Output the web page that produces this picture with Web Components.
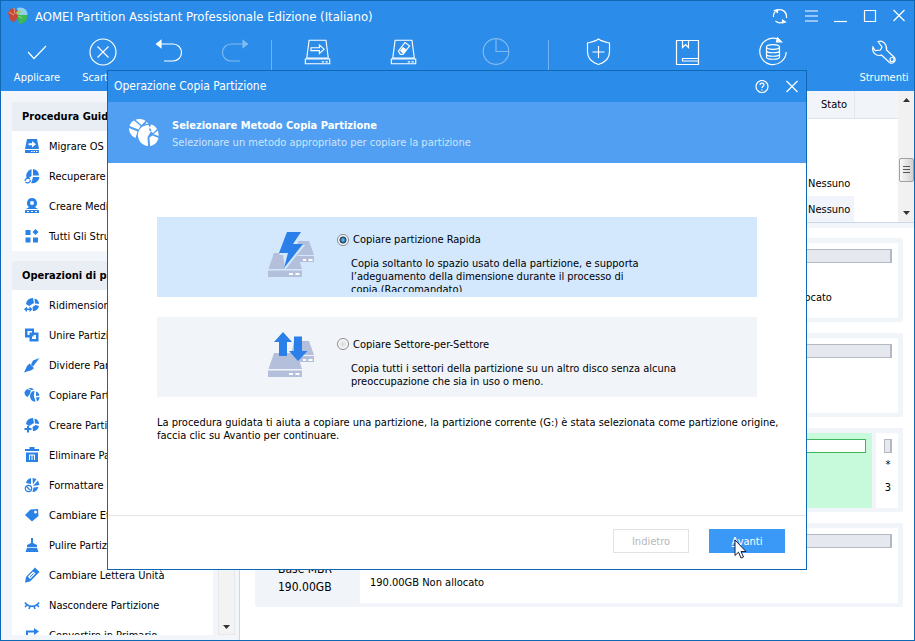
<!DOCTYPE html>
<html lang="it">
<head>
<meta charset="utf-8">
<title>AOMEI Partition Assistant</title>
<style>
html,body{height:100%}
body{margin:0;font:11px/13px "DejaVu Sans Condensed","DejaVu Sans","Liberation Sans",sans-serif;color:#000;--blue:#2b8ce9;--line:#0e68b4;--pale:#f1f4f9;--icon:#2a82e6}
</style>
</head>
<body>
<pa-window>
  <pa-titlebar slot="top">AOMEI Partition Assistant Professionale Edizione (Italiano)</pa-titlebar>
  <pa-toolbar slot="top"></pa-toolbar>
  <pa-sidebar slot="side">
    <pa-group heading="Procedura Guidata">
      <pa-action icon="migrate">Migrare OS su SSD</pa-action>
      <pa-action icon="recover">Recuperare Partizione</pa-action>
      <pa-action icon="media">Creare Media Avviabile</pa-action>
      <pa-action icon="tools">Tutti Gli Strumenti</pa-action>
    </pa-group>
    <pa-group heading="Operazioni di partizione">
      <pa-action icon="resize">Ridimensionare Partizione</pa-action>
      <pa-action icon="merge">Unire Partizioni</pa-action>
      <pa-action icon="split">Dividere Partizione</pa-action>
      <pa-action icon="copy">Copiare Partizione</pa-action>
      <pa-action icon="create">Creare Partizione</pa-action>
      <pa-action icon="trash">Eliminare Partizione</pa-action>
      <pa-action icon="format">Formattare Partizione</pa-action>
      <pa-action icon="tag">Cambiare Etichetta</pa-action>
      <pa-action icon="broom">Pulire Partizione</pa-action>
      <pa-action icon="pencil">Cambiare Lettera Unità</pa-action>
      <pa-action icon="hide">Nascondere Partizione</pa-action>
      <pa-action icon="convert">Convertire in Primario</pa-action>
    </pa-group>
  </pa-sidebar>
  <pa-volumes slot="main"></pa-volumes>
  <pa-disks slot="main">
    <pa-disk><pa-part></pa-part><pa-part kind="tail">Non allocato</pa-part></pa-disk>
    <pa-disk><pa-part></pa-part></pa-disk>
    <pa-disk><pa-part kind="selected"></pa-part><pa-part kind="small">*<br>3</pa-part></pa-disk>
    <pa-disk size="190.00GB"><span slot="type">Base MBR</span><pa-part>190.00GB Non allocato</pa-part></pa-disk>
  </pa-disks>
  <pa-dialog slot="dialog" heading="Operazione Copia Partizione">
    <strong slot="title">Selezionare Metodo Copia Partizione</strong>
    <span slot="subtitle">Selezionare un metodo appropriato per copiare la partizione</span>
    <pa-method icon="fast" label="Copiare partizione Rapida" checked>Copia soltanto lo spazio usato della partizione, e supporta<br>l’adeguamento della dimensione durante il processo di<br>copia.(Raccomandato)</pa-method>
    <pa-method icon="sector" label="Copiare Settore-per-Settore">Copia tutti i settori della partizione su un altro disco senza alcuna<br>preoccupazione che sia in uso o meno.</pa-method>
    <span slot="note">La procedura guidata ti aiuta a copiare una partizione, la partizione corrente (G:) è stata selezionata come partizione origine,<br>faccia clic su Avantio per continuare.</span>
  </pa-dialog>
</pa-window>
<script>
const disk = '<path d="M4.5 3.5h18l2.500 19h-23z"/><path d="M.5 23.500h26v5h-26z"/><path d="M18 26.500h2.500M22 26.500h2.500"/>';
const line = {
  check:[28,28,'<path d="M5 14l6 6.500L23 8"/>'],
  discard:[28,28,'<circle cx="14" cy="14" r="13"/><path d="M8.500 8.500l11 11M19.500 8.500l-11 11"/>'],
  undo:[28,28,'<path d="M5 6h13a8.500 8.500 0 0 1 0 17h-9"/><path d="M1.500 6l4.500-3.500v7z" fill="currentColor"/>'],
  redo:[28,28,'<path d="M23 6h-13a8.500 8.500 0 0 0 0 17h9"/><path d="M26.500 6l-4.500-3.500v7z" fill="currentColor"/>'],
  diskcopy:[28,32,disk+'<path d="M6.500 11.500h9v-3l5 4.500-5 4.500v-3h-9z"/>'],
  diskwipe:[28,32,disk+'<path d="M8 15l7-9 5 3.500-7 9h-3z"/><path d="M10.500 14.500l2.500-3 3 2-3 3.500z" fill="currentColor"/>'],
  clock:[28,28,'<circle cx="14" cy="13.500" r="12.800"/><path d="M14 .5v13h13"/>'],
  shield:[28,30,'<path d="M14.500 2c3 2.500 7 3 11 4v9c0 7-5 10.500-11 12.500C8.500 25.500 3.500 22 3.500 15V6c4-1 8-1.500 11-4z"/><path d="M14.500 9v12M8.500 15h12"/>'],
  book:[28,28,'<path d="M3.500 2.500h22v24h-22z"/><path d="M9.500 2.500v7l3-3 3 3v-7M25 20.500H9.500v2.500H25"/>'],
  restore:[30,30,'<path d="M22 3.200A13.200 13.200 0 1 0 28.200 15"/><path d="M19.500.800l4 4h-5z" fill="currentColor"/><ellipse cx="15" cy="10" rx="6.500" ry="2.300"/><path d="M8.500 10v10c0 3 13 3 13 0V10M8.500 13.500c0 3 13 3 13 0M8.500 17c0 3 13 3 13 0"/>'],
  wrench:[28,28,'<path d="M8 3.500l4 5.500-1.500 3L5 12.500 3 9c-1.500 5 3 10 8.500 8l8 7.500a3.600 3.600 0 0 0 5-5L16.500 12c1-5-3.500-10.500-8.500-8.500z"/><circle cx="22" cy="21.500" r="2"/>'],
  refresh:[16,16,'<path d="M5 2.500A6.500 6.500 0 0 1 14.500 8v2M1.500 9V7a6 6 0 0 1 1.500-3M3.500 13A6.500 6.500 0 0 0 11 14"/><path d="M2.500 2.500l3-1v3zM13.500 14l-3 1v-3z" fill="currentColor"/>'],
  menu:[16,16,'<path d="M2 3h13M2 8h13M2 13h13"/>'],
  min:[14,16,'<path d="M0 13.500h13"/>'],
  max:[14,16,'<path d="M1.500 2.500h11v11h-11z"/>'],
  close:[14,16,'<path d="M1.500 2l11 11M12.500 2l-11 11"/>'],
  help:[14,14,'<circle cx="7" cy="6.500" r="6"/><path d="M5 5C5 2.300 9 2.500 9 4.800 9 6.200 7 6.200 7 8M7 9.300v1.200"/>']
};
const solid = {
  migrate:'<path d="M3 1h10l2 10H1zM1 12h14v3H1z"/><path fill="#fff" d="M4.500 5.200H8V3l4 3.200-4 3.200V7.200H4.500zM7 13h1.500v1H7zm2.500 0H11v1H9.500zm2.500 0h1.500v1H12z"/>',
  recover:'<path d="M7.500 1v7L3 11A7 7 0 0 1 7.500 1zM9 1a7 7 0 0 1 6 6.500H9zM9 9h6.500A7 7 0 0 1 7 15l1-2z"/><path d="M1 13a3 3 0 0 1 5-2M6.500 12a3 3 0 0 1-5 2" fill="none" stroke="currentColor" stroke-width="1.300"/>',
  media:'<path d="M8 0a5 5 0 0 1 3 9l3 2H2l3-2A5 5 0 0 1 8 0zM1 12h14v3H1z"/><circle cx="8" cy="5" r="2" fill="#fff"/><path fill="#fff" d="M3 13h2v1H3zm4 0h2v1H7zm4 0h2v1h-2z"/>',
  tools:'<path d="M1.500 2h5v5h-5zM11.500 1l3 3-3 3-3-3zM1.500 9.500h5v5h-5zM9 9.500h5v5H9z"/>',
  resize:'<path d="M2 7a6.500 6.500 0 0 1 7-6l1 5-5 3zM10.500 1.500c3 .5 4.500 3 4.500 5.500l-4-.5zM15 9c-.5 3-3 5-6 5l-.500-4 3-2z"/><path d="M0 12.200l3-2.700v2h2.500v-2l3 2.700-3 2.800v-2H3v2z"/>',
  merge:'<path fill-rule="evenodd" d="M1 1.500h9v4h4.500v9H5.500v-4H1zM3.500 4v4h2V5.500H8V4zM8 8v4h4V8z"/><path d="M7 7h2.500v2.500H7z"/>',
  split:'<path d="M15.500 1L9 9.500l-2-2 2-4zM5.500 6.500l4.500 4.500L8 13l-8 2.500L3 9z"/>',
  copy:'<path d="M.5 5L3 2l4 1.500-1.500 4L3.500 10C1 9 .5 7 .5 5zM4 1.500C6 .5 9 1 10 2.500L7.500 3zM6 9c0-3 2-5 4.500-5L9.800 9l1.800 5.500C8 15 6 12 6 9zM12 4.500c2 .5 3 2 3.500 4l-3.500.5zM12 10.500l3.500-.5c0 2-1 3.500-2.500 4.500z"/>',
  create:'<path d="M2 7a6.500 6.500 0 0 1 7-6l1 5-5 3zM10.500 1.500c3 .5 4.500 3 4.500 5.500l-4-.5zM15 9c-.5 3-3 5-6 5l-.500-4 3-2z"/><path d="M3 9h2v2h2.500v2H5v2.500H3V13H.5v-2H3z"/>',
  trash:'<path d="M5.500 0h5v2H15v2H1V2h4.500zM2 5.500h12V15H2z"/><path d="M5.500 13V8h5v5M8 8v5" fill="none" stroke="#fff"/>',
  format:'<path d="M2 6a6.500 6.500 0 0 1 5-5v6zM8.500 1l4 1L9 7.500zM14 3.500l1.500 4.500L9 9zM9.500 10.500l5-.5c-1 3-3 5-6 5z"/><circle cx="4.500" cy="11.500" r="3.200" fill="none" stroke="currentColor" stroke-width="1.200"/><path d="M2.500 9.500l4 4" stroke="currentColor" stroke-width="1.200"/>',
  tag:'<path d="M6.500 2.500L14 2l.5 7L8 14.500 1 8z"/><circle cx="11.500" cy="5" r="1.500" fill="#fff"/>',
  broom:'<path d="M7 1h2v5l4 2v2H3V8l4-2zM3 10.800h10l1.500 4.200h-13z"/>',
  pencil:'<path fill-rule="evenodd" d="M11 .5L15.500 5 6 14.500l-5 1 1-5.500zM9 4.500L4 9.500 6 12l5.500-5.500z"/><path d="M9.500 6.500L6 10" stroke="currentColor" stroke-width="1"/>',
  hide:'<path d="M1 5.500c3 5 11 5 14 0M3 8L1 10M6 9.500l-1 2.500M10 9.500l1 2.500M13 8l2 2" fill="none" stroke="currentColor" stroke-width="1.600"/>',
  convert:'<path d="M3 9V4.500h9" fill="none" stroke="currentColor" stroke-width="2"/><path d="M10 1l5 3.500L10 8z"/><path d="M3 9v5h10" fill="none" stroke="currentColor" stroke-width="2"/>'
};
const drives = '<path fill="#b3bfdb" d="M27 9h15l5 14H24zM30 24h17v6H30z"/><path fill="#b3bfdb" d="M7 21h23l5 16H1.500zM1 38.500h34v6.500H1z"/>';
const marks = '<path fill="#fff" d="M22 41h4v2h-4zM28.500 41h4v2h-4zM36 27h3v2h-3zM41.500 27h4v2h-4z"/>';
const art = {
  fast:drives+'<path fill="var(--gap)" d="M18 1l-10 22h8l2 15 20-25H30L35 1z"/><path fill="#b3bfdb" d="M7 21h6l-1 3H6z"/><path fill="#2a7fe8" d="M20 0h14l-8 12h10L17 36l4-15h-9z"/>'+marks,
  sector:drives+'<path fill="#2a7fe8" d="M16 0l9 10h-5v14h-8V10H7zM27 4.500h8V19h5.500L31 29l-9-10h5z"/>'+marks
};
const svgLine = n => { const [w,h,p]=line[n]; return `<svg width="${w}" height="${h}" viewBox="0 0 ${w} ${h}" fill="none" stroke="currentColor" stroke-width="1.200" aria-hidden="true">${p}</svg>`; };
const define = (name, html) => customElements.define(name, class extends HTMLElement {
  constructor(){ super(); this.attachShadow({mode:'open'}).innerHTML = '<style>*{box-sizing:border-box}button{font:inherit;color:inherit;background:none;border:0;padding:0;margin:0}svg{display:block;flex:none}</style>' + (typeof html==='function' ? html(this) : html); }
});

define('pa-window', `<style>
:host{display:flex;flex-direction:column;height:100vh;box-sizing:border-box;border:1px solid var(--line);background:#fff;position:relative;overflow:hidden}
.body{display:flex;flex:1;min-height:0}
main{flex:1;min-width:0;display:flex;flex-direction:column;border-left:1px solid #ccd8e6}
</style><header><slot name="top"></slot></header><div class="body"><slot name="side"></slot><main><slot name="main"></slot></main></div><slot name="dialog"></slot>`);

define('pa-titlebar', `<style>
:host{display:flex;align-items:center;height:30px;padding:0 8px 0 6px;gap:7px;background:var(--blue);color:#fff;font-size:13px}
.t{flex:1;white-space:nowrap}
nav{display:flex;gap:15px}
</style>
<svg width="21" height="18" viewBox="0 0 21 18" aria-hidden="true"><path fill="#8fd0ef" d="M10 1c6-2 11 2 10.500 7L12 8z"/><path fill="#c4483c" d="M1 7c0-3 3-6 6-6l5 5-2 5-5 1z"/><path fill="#c4483c" d="M2 9l6-2 2 5-3 3c-3-.5-5-3-5-6z"/><path fill="#9fd36a" d="M9 5l6-2-2 4-3 1z"/><path fill="#3cb950" d="M11 8l9 0c1 5-3 9-8 9l-1-5z"/><path stroke="#fbd9a0" stroke-width=".6" fill="none" d="M2 5l5 3M7 1l1 6M11 9l4 2"/></svg>
<span class="t"><slot></slot></span>
<nav><button aria-label="Aggiorna">${svgLine('refresh')}</button><button aria-label="Menu">${svgLine('menu')}</button><button aria-label="Riduci">${svgLine('min')}</button><button aria-label="Ingrandisci">${svgLine('max')}</button><button aria-label="Chiudi">${svgLine('close')}</button></nav>`);

const tool = (icon,label,cls='',show='') => `<button class="${cls}" aria-label="${label}">${svgLine(icon)}${show?`<span>${show}</span>`:''}</button>`;
define('pa-toolbar', `<style>
:host{display:flex;height:60px;padding:0 0 0 3px;background:var(--blue);color:#fff}
button{width:66px;height:60px;display:flex;flex-direction:column;align-items:center;padding-top:6px}
svg{height:30px;overflow:visible}
span{margin-top:4px;line-height:14px}
.off{opacity:.4}
.w{width:86px}.x{width:98px}.y{width:92px}
i{width:1px;height:30px;margin:9px 3px 0;background:#71b3f2}
.last{width:60px;margin-left:auto}
</style>${tool('check','Applicare','','Applicare')}${tool('discard','Scartare','','Scartare')}${tool('undo','Annulla')}${tool('redo','Ripeti','off')}<i></i>${tool('diskcopy','Copia disco','w')}${tool('diskwipe','Pulire disco','w')}${tool('clock','Pianifica','off x')}<i></i>${tool('shield','Proteggi','y')}${tool('book','Manuale','w')}${tool('restore','Backup','w')}${tool('wrench','Strumenti','last','Strumenti')}`);

define('pa-sidebar', `<style>
:host{display:flex;width:238px;flex:none;box-sizing:border-box;background:#f2f6fb;padding:11px 4px 5px 11px;gap:5px}
.list{flex:1;min-width:0;overflow:hidden;display:flex;flex-direction:column;gap:10px}
.bar{width:17px;background:#f3f3f4;border:1px solid #e8e8ea;display:flex;align-items:flex-end;justify-content:center;padding-bottom:5px}
</style><div class="list"><slot></slot></div><div class="bar"><svg width="7" height="4"><path d="M0 0h7L3.500 4z" fill="#333"/></svg></div>`);

define('pa-group', el => `<style>
:host{display:block;flex:none;background:#fff}
h2{margin:0;height:29px;line-height:29px;padding-left:10px;background:#e9edf4;font-size:11px;white-space:nowrap}
</style><h2>${el.getAttribute('heading')}</h2><slot></slot>`);

define('pa-action', el => `<style>
:host{display:block}
button{display:flex;align-items:center;gap:9px;height:30px;width:100%;padding-left:12px;white-space:nowrap}
svg{color:var(--icon)}
</style><button><svg width="16" height="16" viewBox="0 0 16 16" fill="currentColor" aria-hidden="true">${solid[el.getAttribute('icon')]}</svg><span><slot></slot></span></button>`);

define('pa-volumes', `<style>
:host{display:flex;height:132px;box-sizing:border-box;flex:none;border-bottom:1px solid #ccd8e6}
.t{flex:1}
table{width:100%;border-collapse:collapse}
th{height:27px;padding:0;background:var(--pale);border-bottom:1px solid #dfe4ea;font-weight:normal;text-align:left}
th:nth-child(2){width:46px;padding-left:13px;border-right:1px solid #e2e7ee}
td:nth-child(2){padding-left:0}
th:nth-child(3){width:44px}
td{height:26px;padding:0}
tr.alt td{background:#f1f5fb}
tr td:last-child{background:#fff}
.bar{width:16px;background:#f1f1f1;display:flex;flex-direction:column;align-items:center;padding:7px 0}
.up{flex:1}
.thumb{width:15px;height:24px;border:1px solid #a0a0a0;border-radius:2px;background:linear-gradient(90deg,#f8f8f8,#d2d2d4);display:flex;align-items:center;justify-content:center}
.down{height:33px;display:flex;align-items:flex-end}
</style><div class="t"><table><thead><tr><th></th><th scope="col">Stato</th><th></th></tr></thead><tbody><tr><td></td><td></td><td></td></tr><tr><td></td><td></td><td></td></tr><tr><td></td><td>Nessuno</td><td></td></tr><tr class="alt"><td></td><td>Nessuno</td><td></td></tr></tbody></table></div>
<div class="bar"><svg class="up" width="7" height="4" viewBox="0 0 7 4" preserveAspectRatio="xMidYMin"><path d="M0 4h7L3.500 0z" fill="#333"/></svg><div class="thumb"><svg width="7" height="8"><path d="M0 .5h7M0 3.500h7M0 6.500h7" stroke="#555"/></svg></div><div class="down"><svg width="7" height="4"><path d="M0 0h7L3.500 4z" fill="#333"/></svg></div></div>`);

define('pa-disks', `<style>
:host{display:flex;flex-direction:column;gap:11px;flex:1;min-height:0;padding:10px 11px 0 15px;border-top:5px solid #f2f6fb}
</style><slot></slot>`);

define('pa-disk', el => `<style>
:host{display:flex;background:var(--pale);padding:5px 5px 4px 0;height:84px;box-sizing:border-box;border-radius:2px}
.info{width:105px;flex:none;padding:32px 0 0 23px;font-size:12px;line-height:18px}
.parts{flex:1;display:flex;gap:4px;min-width:0}
</style><div class="info"><slot name="type"></slot><div>${el.getAttribute('size')||''}</div></div><div class="parts"><slot></slot></div>`);

define('pa-part', `<style>
:host{flex:1;background:#fff;padding:6px 6px 0 10px;box-sizing:border-box;line-height:23px}
.b{height:14px;border:1px solid #b4b8c0;border-right-width:2px;background:#e5e8ef}
.c{margin-top:23px}
:host([kind=selected]){background:#c6fadb}
:host([kind=selected]) .b{background:#fff;border:1px solid #3db65a}
:host([kind=tail]){flex:0 0 138px}
:host([kind=small]){flex:0 0 22px;padding-left:8px;text-align:center}
:host([kind=small]) .c{margin-top:0}
</style><div class="b"></div><div class="c"><slot></slot></div>`);

define('pa-dialog', el => `<style>
:host{position:absolute;inset:0;display:grid;place-items:center;padding:0 1px 1px 0;pointer-events:none}
section{pointer-events:auto;width:700px;max-width:100%;height:500px;display:flex;flex-direction:column;background:#fff;border:1px solid var(--line)}
.bar{display:flex;align-items:center;height:31px;flex:none;padding:0 7px 0 6px;background:var(--blue);color:#fff;font-size:12px;gap:16px}
.bar span{flex:1}
.banner{display:flex;align-items:center;gap:13px;height:61px;flex:none;padding-left:21px;background:#509ff2;color:#fff}
.banner p{margin:0;line-height:17px}
.banner div{padding-top:2px}
.sub{color:#cfe5fd}
.content{flex:1;padding:54px 49px 0;display:flex;flex-direction:column;gap:20px;min-height:0}
.note{margin:-1px 0 0;white-space:nowrap}
footer{flex:none;display:flex;justify-content:flex-end;gap:20px;padding:13px 21px 16px;border-top:1px solid #e6e6e8}
footer button{position:relative;width:76px;height:24px;border:1px solid #e0e2e6;color:#b5b8be}
footer .go{background:#3a99f6;border-color:#3a99f6;color:#fff}
.cursor{position:absolute;left:24px;top:9px}
</style><section role="dialog" aria-label="${el.getAttribute('heading')}">
<div class="bar"><span>${el.getAttribute('heading')}</span><button aria-label="Aiuto">${svgLine('help')}</button><button aria-label="Chiudi">${svgLine('close')}</button></div>
<div class="banner"><svg width="30" height="28" viewBox="0 0 30 28" fill="#fff"><path d="M.5 7C1.500 4 3 2.500 5 1.500l6.500 5.500-2 3.500zM6.500.8C9-.5 14 0 16.500 2L12.500 6zM0 9l8.500 3.500L6.500 19C3 17.500 0 14 0 9zM17.500 3l2 2-3-.3z"/><path d="M19.500 6C12.500 6 8.300 11.500 9 17.500c.7 5 4.500 9 10 9.500l-.5-9 4-6.500zM22 5.500c2.500.5 4.500 2 6 4.500l-4 4-4-3zM28.800 11.500c.7 2 1 3.500.7 5.500L24.500 15zM20.500 18.500l3-2 6 2.500c-1 4-4 7.500-8.500 8z"/></svg><div><p><slot name="title"></slot></p><p class="sub"><slot name="subtitle"></slot></p></div></div>
<div class="content"><slot></slot><p class="note"><slot name="note"></slot></p></div>
<footer><button disabled>Indietro</button><button class="go"><u>A</u>vanti<svg class="cursor" width="13" height="21" viewBox="0 0 13 21"><path d="M1 1v15.500l3.500-3.300L7 19l2.500-1-2.500-5.500h5z" fill="#fff" stroke="#1c1c3c"/></svg></button></footer></section>`);

define('pa-method', el => { const on = el.hasAttribute('checked'); return `<style>
:host{display:flex;align-items:center;height:80px;flex:none;box-sizing:border-box;padding:15px 0 5px 110px;gap:22px;--gap:#d3e8fd;background:${on?'#d3e8fd':'#f1f4f9'}}
svg{align-self:flex-start}
.r{flex:1;max-height:100%;overflow:hidden;white-space:nowrap}
label{display:flex;align-items:center;gap:4px;height:15px}
input{appearance:none;margin:0;width:12px;height:12px;border:1px solid #85888e;border-radius:50%;background:radial-gradient(#d8d8d8,#f4f4f4 60%);box-shadow:inset 0 0 0 1px #fff}
input:checked{background:radial-gradient(circle,#58b4e8 0 1px,#14385c 3px,#eef1f4 4px)}
p{margin:10px 0 0 14px}
</style><svg width="48" height="47" viewBox="0 0 48 47" aria-hidden="true">${art[el.getAttribute('icon')]}</svg><div class="r"><label><input type="radio" name="m" ${on?'checked':''}>${el.getAttribute('label')}</label><p><slot></slot></p></div>`; });
</script>
</body>
</html>
